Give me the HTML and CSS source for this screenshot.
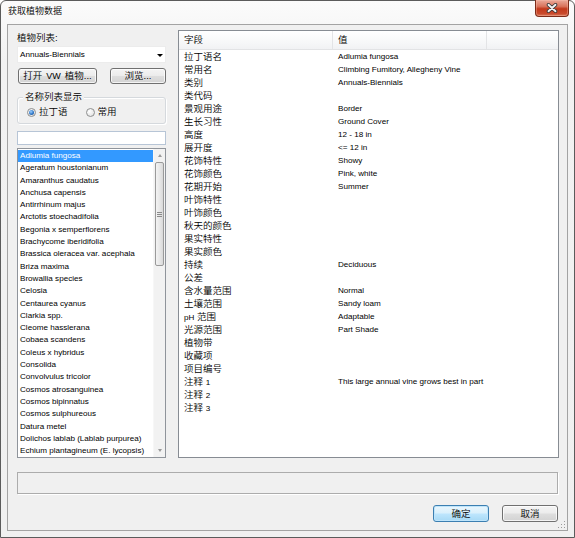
FILE: index.html
```html
<!DOCTYPE html>
<html lang="zh">
<head>
<meta charset="utf-8">
<title>获取植物数据</title>
<link rel="stylesheet" href="styles.css">
</head>
<body>
<div class="window">
  <div class="titlebar">
    <span class="title">获取植物数据</span>
    <div class="close">
      <svg width="12" height="10" viewBox="0 0 12 10">
        <path d="M2.5 1.8 L9.5 8.2 M9.5 1.8 L2.5 8.2" stroke="#3a3a3a" stroke-width="3.6" stroke-linecap="round"/>
        <path d="M2.5 1.8 L9.5 8.2 M9.5 1.8 L2.5 8.2" stroke="#f4f4f4" stroke-width="1.9" stroke-linecap="round"/>
      </svg>
    </div>
  </div>
  <div class="client">
    <div class="main">
      <div class="left">
        <div class="label cjk">植物列表:</div>
        <div class="combo"><span class="lat">Annuals-Biennials</span><span class="arrow"></span></div>
        <div class="btnrow">
          <div class="btn btn-open cjk">打开<span class="lat vw">VW</span>植物...</div>
          <div class="btn btn-browse cjk">浏览...</div>
        </div>
        <div class="group">
          <span class="group-title cjk">名称列表显示</span>
          <div class="radios">
            <div class="radio-item"><span class="radio checked"></span><span class="cjk">拉丁语</span></div>
            <div class="radio-item"><span class="radio"></span><span class="cjk">常用</span></div>
          </div>
        </div>
        <div class="textbox"></div>
        <div class="listbox">
          <div class="items lat">
            <div class="item selected">Adlumia fungosa</div>
            <div class="item">Ageratum houstonianum</div>
            <div class="item">Amaranthus caudatus</div>
            <div class="item">Anchusa capensis</div>
            <div class="item">Antirrhinum majus</div>
            <div class="item">Arctotis stoechadifolia</div>
            <div class="item">Begonia x semperflorens</div>
            <div class="item">Brachycome iberidifolia</div>
            <div class="item">Brassica oleracea var. acephala</div>
            <div class="item">Briza maxima</div>
            <div class="item">Browallia species</div>
            <div class="item">Celosia</div>
            <div class="item">Centaurea cyanus</div>
            <div class="item">Clarkia spp.</div>
            <div class="item">Cleome hasslerana</div>
            <div class="item">Cobaea scandens</div>
            <div class="item">Coleus x hybridus</div>
            <div class="item">Consolida</div>
            <div class="item">Convolvulus tricolor</div>
            <div class="item">Cosmos atrosanguinea</div>
            <div class="item">Cosmos bipinnatus</div>
            <div class="item">Cosmos sulphureous</div>
            <div class="item">Datura metel</div>
            <div class="item">Dolichos lablab (Lablab purpurea)</div>
            <div class="item">Echium plantagineum (E. lycopsis)</div>
          </div>
          <div class="vscroll">
            <div class="sb-btn"><span class="tri-up"></span></div>
            <div class="sb-track">
              <div class="thumb"><span class="grip"></span></div>
            </div>
            <div class="sb-btn"><span class="tri-down"></span></div>
          </div>
        </div>
      </div>
      <div class="table">
        <div class="thead cjk">
          <div class="th">字段</div>
          <div class="th">值</div>
          <div class="th last"></div>
        </div>
        <div class="tbody">
          <div class="row"><div class="cell cjk">拉丁语名</div><div class="cell lat">Adlumia fungosa</div></div>
          <div class="row"><div class="cell cjk">常用名</div><div class="cell lat">Climbing Fumitory, Allegheny Vine</div></div>
          <div class="row"><div class="cell cjk">类别</div><div class="cell lat">Annuals-Biennials</div></div>
          <div class="row"><div class="cell cjk">类代码</div><div class="cell lat"></div></div>
          <div class="row"><div class="cell cjk">景观用途</div><div class="cell lat">Border</div></div>
          <div class="row"><div class="cell cjk">生长习性</div><div class="cell lat">Ground Cover</div></div>
          <div class="row"><div class="cell cjk">高度</div><div class="cell lat">12 - 18 in</div></div>
          <div class="row"><div class="cell cjk">展开度</div><div class="cell lat">&lt;= 12 in</div></div>
          <div class="row"><div class="cell cjk">花饰特性</div><div class="cell lat">Showy</div></div>
          <div class="row"><div class="cell cjk">花饰颜色</div><div class="cell lat">Pink, white</div></div>
          <div class="row"><div class="cell cjk">花期开始</div><div class="cell lat">Summer</div></div>
          <div class="row"><div class="cell cjk">叶饰特性</div><div class="cell lat"></div></div>
          <div class="row"><div class="cell cjk">叶饰颜色</div><div class="cell lat"></div></div>
          <div class="row"><div class="cell cjk">秋天的颜色</div><div class="cell lat"></div></div>
          <div class="row"><div class="cell cjk">果实特性</div><div class="cell lat"></div></div>
          <div class="row"><div class="cell cjk">果实颜色</div><div class="cell lat"></div></div>
          <div class="row"><div class="cell cjk">持续</div><div class="cell lat">Deciduous</div></div>
          <div class="row"><div class="cell cjk">公差</div><div class="cell lat"></div></div>
          <div class="row"><div class="cell cjk">含水量范围</div><div class="cell lat">Normal</div></div>
          <div class="row"><div class="cell cjk">土壤范围</div><div class="cell lat">Sandy loam</div></div>
          <div class="row"><div class="cell cjk"><span class="lat">pH</span> 范围</div><div class="cell lat">Adaptable</div></div>
          <div class="row"><div class="cell cjk">光源范围</div><div class="cell lat">Part Shade</div></div>
          <div class="row"><div class="cell cjk">植物带</div><div class="cell lat"></div></div>
          <div class="row"><div class="cell cjk">收藏项</div><div class="cell lat"></div></div>
          <div class="row"><div class="cell cjk">项目编号</div><div class="cell lat"></div></div>
          <div class="row"><div class="cell cjk">注释 <span class="lat">1</span></div><div class="cell lat">This large annual vine grows best in part</div></div>
          <div class="row"><div class="cell cjk">注释 <span class="lat">2</span></div><div class="cell lat"></div></div>
          <div class="row"><div class="cell cjk">注释 <span class="lat">3</span></div><div class="cell lat"></div></div>
        </div>
      </div>
    </div>
    <div class="status"></div>
    <div class="actions">
      <div class="btn btn-action btn-default cjk">确定</div>
      <div class="btn btn-action cjk">取消</div>
    </div>
    <svg class="grip-corner" width="9" height="9" viewBox="0 0 9 9">
      <rect x="7" y="1" width="1" height="1" fill="#9a9a9a"/>
      <rect x="4" y="4" width="1" height="1" fill="#9a9a9a"/>
      <rect x="7" y="4" width="1" height="1" fill="#9a9a9a"/>
      <rect x="1" y="7" width="1" height="1" fill="#9a9a9a"/>
      <rect x="4" y="7" width="1" height="1" fill="#9a9a9a"/>
      <rect x="7" y="7" width="1" height="1" fill="#9a9a9a"/>
    </svg>
  </div>
</div>
</body>
</html>
```

FILE: styles.css
```css
* { box-sizing: border-box; }

html, body {
  margin: 0;
  padding: 0;
  background: #ffffff;
}

body {
  width: 575px;
  height: 538px;
  overflow: hidden;
  font-family: "Liberation Sans", "Noto Sans CJK SC", sans-serif;
  color: #000;
}

.cjk {
  font-family: "Liberation Sans", "Noto Sans CJK SC", sans-serif;
  font-size: 9.5px;
  font-weight: 350;
}

.lat {
  font-family: "Liberation Sans", Arial, sans-serif;
  font-size: 8.1px;
  font-weight: 400;
}

.vw { margin: 0 4px; font-size: 9px; }

.window {
  width: 575px;
  height: 538px;
  border: 1px solid #5b5b5b;
  border-radius: 6px 6px 0 0;
  background: linear-gradient(#fbfbfb, #f2f2f2 60px, #f0f0f0);
  padding: 0 6px 6px 6px;
  display: flex;
  flex-direction: column;
}

.titlebar {
  height: 23px;
  display: flex;
  align-items: flex-start;
  justify-content: space-between;
}

.title {
  font-family: "Liberation Sans", "Noto Sans CJK SC", sans-serif;
  font-size: 9px;
  font-weight: 350;
  line-height: 21px;
  padding-left: 1px;
}

.close {
  width: 34px;
  height: 17px;
  margin-top: -1px;
  margin-right: -1px;
  border: 1px solid #7c2b19;
  border-top: none;
  border-radius: 0 0 4px 4px;
  background: linear-gradient(#eaa99a 0%, #d9745c 40%, #c2391c 55%, #c94a2c 85%, #d97a5e 100%);
  box-shadow: inset 0 0 0 1px rgba(255, 200, 180, 0.35);
  display: flex;
  align-items: center;
  justify-content: center;
}

.client {
  position: relative;
  flex: 1;
  border: 1px solid #a3a3a3;
  background: #f0f0f0;
  padding: 5px 8px 0 9px;
  display: flex;
  flex-direction: column;
}

.main {
  height: 428px;
  display: flex;
  gap: 12px;
}

.left {
  width: 149px;
  display: flex;
  flex-direction: column;
}

.label {
  height: 16px;
  line-height: 15px;
}

.combo {
  height: 17px;
  background: #fff;
  border: 1px solid #ececec;
  display: flex;
  align-items: center;
  justify-content: space-between;
  padding: 0 2px 0 2px;
}

.arrow {
  width: 0;
  height: 0;
  border-left: 3px solid transparent;
  border-right: 3px solid transparent;
  border-top: 3px solid #000;
  margin-top: 1px;
}

.btnrow {
  margin-top: 5px;
  height: 16px;
  display: flex;
  justify-content: space-between;
}

.btn {
  height: 100%;
  border: 1px solid #707070;
  border-radius: 3px;
  background: linear-gradient(#f4f4f4 0%, #ececec 48%, #dedede 52%, #d3d3d3 100%);
  box-shadow: inset 0 0 0 1px rgba(255, 255, 255, 0.75);
  display: flex;
  align-items: center;
  justify-content: center;
  line-height: 12px;
  white-space: nowrap;
}

.btn-open { width: 79px; margin-left: 1px; }
.btn-browse { width: 56px; }

.group {
  margin-top: 13px;
  height: 27px;
  border: 1px solid #d5d9dd;
  border-radius: 3px;
  box-shadow: 1px 1px 0 #ffffff, inset 1px 1px 0 #ffffff;
  display: flex;
  flex-direction: column;
  align-items: flex-start;
}

.group-title {
  margin: -7px 0 0 5px;
  padding: 0 2px;
  background: #f0f0f0;
  line-height: 12px;
  height: 12px;
}

.radios {
  margin-top: 3px;
  padding-left: 9px;
  display: flex;
  align-items: center;
  height: 12px;
  line-height: 12px;
}

.radio-item {
  display: flex;
  align-items: center;
  gap: 3px;
  margin-right: 18px;
}

.radio {
  width: 9px;
  height: 9px;
  border-radius: 50%;
  border: 1px solid #8e8f8f;
  background: radial-gradient(circle at 35% 35%, #ffffff 0%, #e6e6e6 70%, #d0d0d0 100%);
  display: flex;
  align-items: center;
  justify-content: center;
}

.radio.checked::after {
  content: "";
  width: 5px;
  height: 5px;
  border-radius: 50%;
  background: radial-gradient(circle at 40% 35%, #9fd0ff 0%, #2f77c8 55%, #1b4780 100%);
}

.textbox {
  margin-top: 7px;
  height: 14px;
  background: #fff;
  border: 1px solid #b7c5d6;
}

.listbox {
  margin-top: 3px;
  flex: 1;
  min-height: 0;
  border: 1px solid #8f949b;
  background: #fff;
  display: flex;
  overflow: hidden;
}

.items {
  flex: 1;
  min-width: 0;
  padding-top: 1px;
  overflow: hidden;
}

.item {
  height: 12.3px;
  line-height: 12.3px;
  padding-left: 2px;
  white-space: nowrap;
  overflow: hidden;
}

.item.selected {
  background: #3399ff;
  color: #fff;
}

.vscroll {
  width: 12px;
  background: #f2f2f2;
  border-left: 1px solid #f7f7f7;
  display: flex;
  flex-direction: column;
}

.sb-btn {
  height: 13px;
  display: flex;
  align-items: center;
  justify-content: center;
}

.tri-up {
  width: 0;
  height: 0;
  border-left: 2.5px solid transparent;
  border-right: 2.5px solid transparent;
  border-bottom: 3px solid #9a9a9a;
}

.tri-down {
  width: 0;
  height: 0;
  border-left: 2.5px solid transparent;
  border-right: 2.5px solid transparent;
  border-top: 3px solid #9a9a9a;
}

.sb-track {
  flex: 1;
  padding: 0 1px;
}

.thumb {
  height: 104px;
  border: 1px solid #9a9a9a;
  border-radius: 2px;
  background: linear-gradient(90deg, #f3f3f3, #e8e8e8 50%, #d9d9d9);
  display: flex;
  align-items: center;
  justify-content: center;
}

.grip {
  width: 5px;
  height: 5px;
  background: repeating-linear-gradient(#8a8a8a 0 1px, transparent 1px 2px);
}

.table {
  flex: 1;
  border: 1px solid #878c93;
  background: #fff;
  display: flex;
  flex-direction: column;
  overflow: hidden;
}

.thead {
  height: 19px;
  display: grid;
  grid-template-columns: 154px 154px 1fr;
  border-bottom: 1px solid #e2e3e5;
  background: linear-gradient(#ffffff, #f7f8f9 60%, #f1f2f4);
}

.th {
  border-right: 1px solid #e3e4e6;
  padding-left: 5px;
  line-height: 18px;
}

.th.last { border-right: none; }

.row {
  height: 13px;
  display: grid;
  grid-template-columns: 154px 154px 1fr;
}

.cell {
  padding-left: 5px;
  line-height: 13px;
  white-space: nowrap;
  overflow: hidden;
}

.status {
  margin-top: 14px;
  height: 22px;
  border: 1px solid #acacac;
  box-shadow: 1px 1px 0 #ffffff;
  margin-right: 1px;
}

.actions {
  margin-top: 11px;
  height: 17px;
  display: flex;
  justify-content: flex-end;
  gap: 13px;
  padding-right: 1px;
}

.btn-action { width: 56px; }

.btn-default {
  border-color: #3c7fb1;
  box-shadow: inset 0 0 0 1px #bfe5fb;
  background: linear-gradient(#eaf6fd 0%, #d9f0fc 48%, #bee6fd 52%, #a7d9f5 100%);
}

.grip-corner {
  position: absolute;
  right: 1px;
  bottom: 1px;
}
```
